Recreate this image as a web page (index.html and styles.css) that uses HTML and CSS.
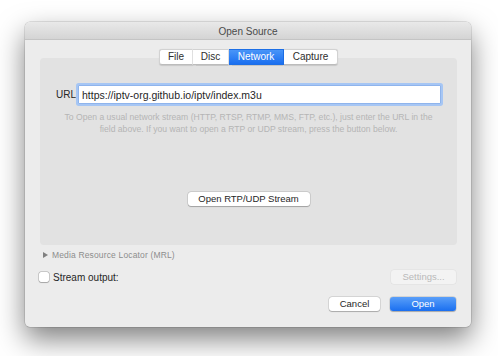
FILE: index.html
```html
<!DOCTYPE html>
<html lang="en">
<head>
    <meta charset="UTF-8">
    <title>Open Source</title>
    <link rel="stylesheet" href="styles.css">
</head>
<body>
    <div class="window">
        <div class="titlebar">Open Source</div>

        <div class="content">
            <div class="tabs">
                <span class="tab">File</span>
                <span class="tab">Disc</span>
                <span class="tab active">Network</span>
                <span class="tab">Capture</span>
            </div>

            <div class="panel">
                <div class="url-row">
                    <label for="url">URL</label>
                    <input type="text" id="url" class="url-input" value="https://iptv-org.github.io/iptv/index.m3u">
                </div>
                <p class="help">To Open a usual network stream (HTTP, RTSP, RTMP, MMS, FTP, etc.), just enter the URL in the<br>field above. If you want to open a RTP or UDP stream, press the button below.</p>
                <div class="center">
                    <button class="btn">Open RTP/UDP Stream</button>
                </div>
            </div>

            <div class="mrl"><span class="arrow"></span>Media Resource Locator (MRL)</div>

            <div class="output-row">
                <label class="check"><span class="box"></span>Stream output:</label>
                <button class="btn settings" disabled>Settings...</button>
            </div>

            <div class="actions">
                <button class="btn cancel">Cancel</button>
                <button class="btn primary">Open</button>
            </div>
        </div>
    </div>
</body>
</html>
```

FILE: styles.css
```css
html, body {
    height: 100%;
}
body {
    margin: 0;
    padding: 22px 0 0 25px;
    box-sizing: border-box;
    background: #ffffff;
    font-family: 'Liberation Sans', Arial, sans-serif;
    color: #262626;
}
.window {
    width: 446px;
    height: 305px;
    background: #ececec;
    border-radius: 5px;
    box-shadow: 0 0 0 0.5px rgba(0, 0, 0, 0.2), 0 12px 28px rgba(0, 0, 0, 0.5);
    overflow: hidden;
}
.titlebar {
    height: 17px;
    line-height: 19px;
    text-align: center;
    font-size: 10px;
    color: #4a4a4a;
    background: linear-gradient(#e9e9e9, #d4d4d4);
    border-bottom: 1px solid #c4c4c4;
}
.content {
    padding: 9px 14px 0 15px;
}
.tabs {
    display: flex;
    justify-content: center;
    position: relative;
    z-index: 1;
    margin-bottom: -7px;
}
.tab {
    height: 14px;
    line-height: 14px;
    font-size: 10px;
    text-align: center;
    color: #2e2e2e;
    background: #ffffff;
    border-top: 0.5px solid #d2d2d2;
    border-bottom: 0.5px solid #bcbcbc;
    border-right: 1px solid #e2e2e2;
    box-shadow: 0 0.5px 1px rgba(0, 0, 0, 0.12);
}
.tab:nth-child(1) { width: 32px; border-left: 0.5px solid #d2d2d2; border-radius: 3px 0 0 3px; }
.tab:nth-child(2) { width: 35px; }
.tab:nth-child(3) { width: 54px; }
.tab:nth-child(4) { width: 53px; border-right: 0.5px solid #d2d2d2; border-radius: 0 3px 3px 0; }
.tab.active {
    color: #ffffff;
    background: linear-gradient(#4995f8, #1a6ff0);
    border-color: #1d6fe6;
}
.panel {
    height: 187px;
    background: #e2e2e2;
    border-radius: 4px;
    box-sizing: border-box;
    padding-top: 27px;
}
.url-row {
    display: flex;
    align-items: center;
    padding: 0 16px;
}
.url-row label {
    font-size: 10px;
    width: 22px;
}
.url-input {
    flex: 1;
    height: 19px;
    box-sizing: border-box;
    margin: 0;
    padding: 0 3px;
    font-family: inherit;
    font-size: 10.5px;
    color: #1f1f1f;
    background: #ffffff;
    border: 1px solid #8fb4ec;
    border-radius: 1px;
    box-shadow: 0 0 0 2px #a6c6f4;
    outline: none;
}
.help {
    margin: 7px 0 0;
    text-align: center;
    font-size: 8.6px;
    line-height: 12px;
    color: #b5b5b5;
}
.center {
    display: flex;
    justify-content: center;
    margin-top: 57px;
}
.btn {
    height: 14px;
    padding: 0;
    font-family: inherit;
    font-size: 9.5px;
    line-height: 14px;
    color: #262626;
    background: #ffffff;
    border: none;
    border-radius: 3px;
    box-shadow: 0 0 0 0.5px rgba(0, 0, 0, 0.16), 0 0.5px 1px rgba(0, 0, 0, 0.22);
}
.center .btn {
    width: 122px;
}
.mrl {
    display: flex;
    align-items: center;
    margin: 5px 0 0 3px;
    font-size: 8.5px;
    letter-spacing: 0.15px;
    color: #8c8c8c;
}
.arrow {
    width: 0;
    height: 0;
    margin-right: 4px;
    border-top: 3px solid transparent;
    border-bottom: 3px solid transparent;
    border-left: 5px solid #808080;
}
.output-row {
    display: flex;
    justify-content: space-between;
    align-items: center;
    margin-top: 10px;
    padding-right: 1px;
}
.check {
    display: flex;
    align-items: center;
    font-size: 10px;
}
.box {
    width: 10px;
    height: 10px;
    margin: 0 4px 0 -1px;
    background: #ffffff;
    border-radius: 2px;
    box-shadow: 0 0 0 0.5px rgba(0, 0, 0, 0.28), 0 0.5px 1px rgba(0, 0, 0, 0.18);
}
.settings {
    width: 65px;
    color: #b9b9b9;
    background: #f3f3f3;
    box-shadow: 0 0 0 0.5px rgba(0, 0, 0, 0.06);
}
.actions {
    display: flex;
    justify-content: flex-end;
    gap: 10px;
    margin-top: 13px;
    padding-right: 1px;
}
.cancel {
    width: 51px;
}
.primary {
    width: 66px;
    color: #ffffff;
    background: linear-gradient(#5a9ff9, #1a6ff0);
}
```
